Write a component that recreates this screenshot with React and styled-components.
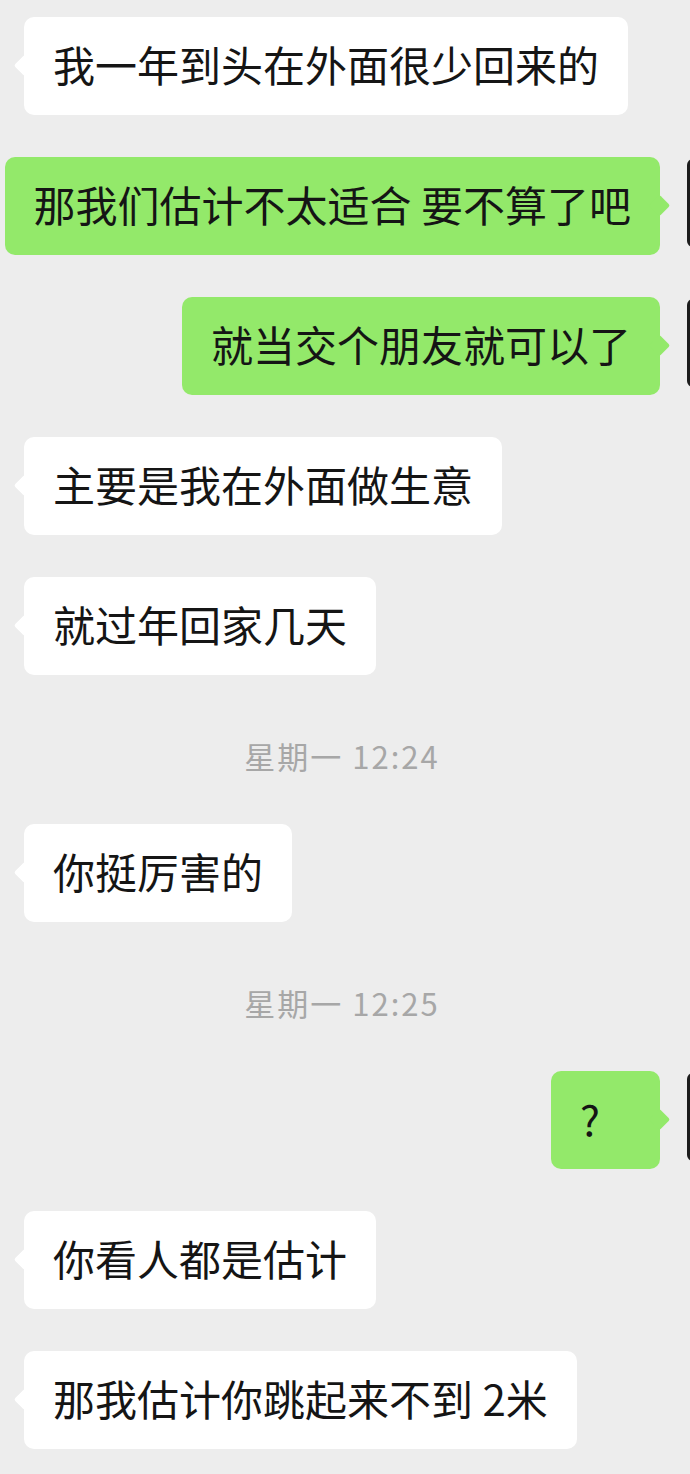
import React from 'react';
import styled, { createGlobalStyle } from 'styled-components';

const GlobalStyle = createGlobalStyle`
  html, body {
    margin: 0;
    padding: 0;
    background: #ededed;
  }
  body {
    font-family: "Noto Sans CJK SC", "Noto Sans", sans-serif;
  }
`;

const Screen = styled.div`
  width: 690px;
  min-height: 1474px;
  overflow: hidden;
  background: #ededed;
`;

// avatars sit just outside the crop on both sides, only a sliver shows on the right
const Thread = styled.div`
  display: flex;
  flex-direction: column;
  gap: 42px;
  margin: 0 -85px 0 -91px;
  padding: 17px 0 27px;
`;

const Row = styled.div`
  display: flex;
  flex-direction: ${props => props.mine ? 'row-reverse' : 'row'};
  align-items: flex-start;
  gap: 27px;
`;

const Avatar = styled.div`
  flex: 0 0 88px;
  height: 88px;
  margin-top: 2px;
  border-radius: 6px;
  background: ${props => props.mine ? '#1c1c1c' : '#c9c9c9'};
`;

const Bubble = styled.div`
  position: relative;
  box-sizing: border-box;
  min-width: 109px;
  padding: 18px 29px 22px;
  border-radius: 10px;
  background: ${props => props.mine ? '#93e96a' : '#ffffff'};
  color: #151515;
  font-size: 42px;
  line-height: 58px;
  white-space: pre;

  &::before {
    content: '';
    position: absolute;
    top: 41px;
    ${props => props.mine ? 'right: -7px;' : 'left: -7px;'}
    width: 15px;
    height: 15px;
    border-radius: 2px;
    background: inherit;
    transform: rotate(45deg);
  }
`;

const Timestamp = styled.div`
  padding: 16px 0 3px;
  text-align: center;
  color: #a7a7a7;
  font-size: 31px;
  line-height: 46px;
  letter-spacing: 2px;
`;

const messages = [
  { text: '我一年到头在外面很少回来的' },
  { text: '那我们估计不太适合 要不算了吧', mine: true },
  { text: '就当交个朋友就可以了', mine: true },
  { text: '主要是我在外面做生意' },
  { text: '就过年回家几天' },
  { time: '星期一 12:24' },
  { text: '你挺厉害的' },
  { time: '星期一 12:25' },
  { text: '?', mine: true },
  { text: '你看人都是估计' },
  { text: '那我估计你跳起来不到 2米' },
];

const App = () => (
  <>
    <GlobalStyle />
    <Screen>
      <Thread>
        {messages.map((m, i) =>
          m.time ? (
            <Timestamp key={i}>{m.time}</Timestamp>
          ) : (
            <Row key={i} mine={m.mine}>
              <Avatar mine={m.mine} />
              <Bubble mine={m.mine}>{m.text}</Bubble>
            </Row>
          )
        )}
      </Thread>
    </Screen>
  </>
);

export default App;
